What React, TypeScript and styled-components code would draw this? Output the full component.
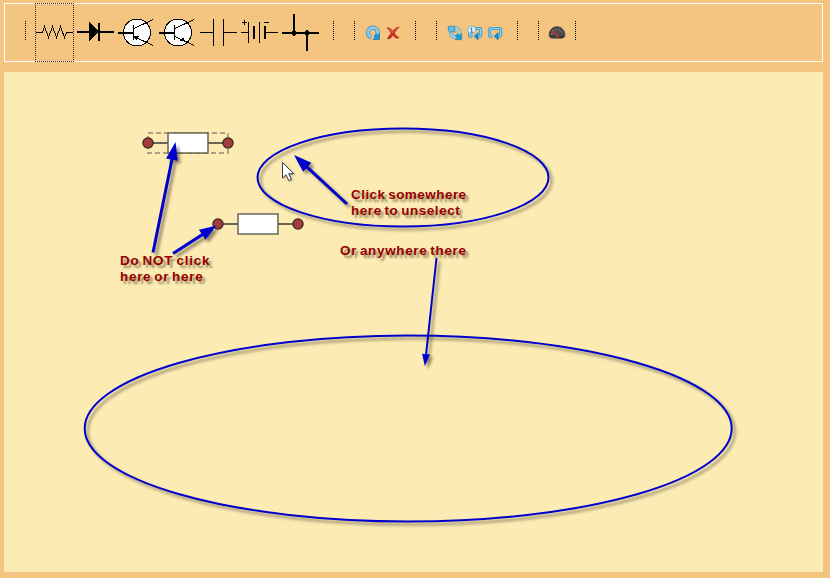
import React from "react";
import styled, { createGlobalStyle } from "styled-components";

const GlobalStyle = createGlobalStyle`
  body { margin: 0; background: #f4c580; font-family: "Liberation Sans", Arial, sans-serif; }
`;

const Page = styled.div`
  box-sizing: border-box;
  width: 830px;
  height: 578px;
  padding: 3px 7px 6px 4px;
  display: flex;
  flex-direction: column;
  gap: 10px;
  background: #f4c580;
`;

const Toolbar = styled.div`
  box-sizing: border-box;
  flex: none;
  height: 59px;
  border: 1px solid #fffdf5;
  display: flex;
  align-items: center;
`;

const Separator = styled.span<{ $before: number }>`
  flex: none;
  width: 1px;
  height: 19px;
  margin: 0 0 4px ${(p) => p.$before}px;
  background: repeating-linear-gradient(to bottom, #000 0 1px, transparent 1px 2px);
`;

const Parts = styled.div`
  display: flex;
  gap: 2px;
  margin: -1px 0 -1px 9px;
`;

const PartButton = styled.button<{ $selected?: boolean }>`
  box-sizing: border-box;
  width: 39px;
  height: 59px;
  padding: 0;
  border: 1px dotted ${(p) => (p.$selected ? "#4b2020" : "transparent")};
  background: transparent;
  svg { display: block; margin: -1px; }
`;

const Actions = styled.div<{ $before: number; $gap: number }>`
  display: flex;
  gap: ${(p) => p.$gap}px;
  margin-left: ${(p) => p.$before}px;
`;

const ActionButton = styled.button<{ $width?: number }>`
  width: ${(p) => p.$width ?? 16}px;
  height: 16px;
  padding: 0;
  border: 0;
  background: transparent;
  svg { display: block; }
`;

const Canvas = styled.main`
  position: relative;
  flex: none;
  height: 500px;
  background: #fcecb4;
`;

const Drawing = styled.svg`
  display: block;
  .mark { filter: drop-shadow(3px 3px 1.5px rgba(40, 30, 20, 0.5)); }
`;

const Note = styled.p<{ $x: number; $y: number }>`
  position: absolute;
  left: ${(p) => p.$x}px;
  top: ${(p) => p.$y}px;
  margin: 0;
  font-size: 13.5px;
  font-weight: bold;
  line-height: 16px;
  white-space: nowrap;
  color: #980000;
  text-shadow: 3px 3px 2px rgba(60, 45, 20, 0.5);
`;

const Line = styled.span<{ $spacing: number }>`
  display: block;
  letter-spacing: ${(p) => p.$spacing}px;
  word-spacing: -1.5px;
`;

function Glyph({ x, children }: { x: number; children: React.ReactNode }) {
  return (
    <svg width="39" height="59" viewBox={`${x} 3 39 59`} shapeRendering="crispEdges" stroke="none" fill="#000">
      {children}
    </svg>
  );
}

function Transistor({ x, npn }: { x: number; npn?: boolean }) {
  return (
    <Glyph x={x}>
      <circle cx={x + 20} cy="32.5" r="13.5" fill="#fff" stroke="#000" />
      <rect x={x + 1} y="32" width="16" height="2" />
      <rect x={x + 16} y="25" width="1" height="15" />
      <path d={`M${x + 17} 28.5L${x + 36} 19.5M${x + 17} 36.5L${x + 36} 45.5`} stroke="#000" fill="none" />
      {npn ? (
        <path d={`M${x + 21} 41h5v-3h-2z`} />
      ) : (
        <path d={`M${x + 17} 36h5l-1 2l-2 2l-2-3z`} />
      )}
    </Glyph>
  );
}

function RotateIcon() {
  return (
    <svg width="16" height="16">
      <path d="M6.5 12.2A4.9 4.9 0 1 1 11.5 10.8" fill="none" stroke="#4589b5" strokeWidth="4.2" />
      <path d="M6.5 12.2A4.9 4.9 0 1 1 11.5 10.8" fill="none" stroke="#8bcdf0" strokeWidth="2.8" />
      <path d="M8 14.5h6.5V8.3l-1.9 1.8-1.3-1-2.4 2.3 1 1.1z" fill="#1699df" stroke="#2478a9" strokeWidth=".7" />
    </svg>
  );
}

function DeleteIcon() {
  return (
    <svg width="16" height="16">
      <path d="M2 3Q4.8 1.6 7.6 6Q10.5 2.4 14.2 2Q11 5 9.3 8Q11 11.3 14 12.8Q11 14.4 7.8 10.2Q5.4 14.5 2.6 14Q2.6 12.5 6.3 8Q4.6 4.4 2 3z" fill="#cf3023" stroke="#a61d18" strokeWidth=".6" />
      <path d="M3.8 3.4Q6 4.3 7.7 7.4Q9.6 4.5 11.8 3.3" fill="none" stroke="#e8745f" strokeWidth=".8" />
    </svg>
  );
}

function RefreshIcon() {
  return (
    <svg width="16" height="16">
      <path d="M7.5 3.2Q13.2 3 12.4 9.5" fill="none" stroke="#7ba3a9" strokeWidth="3.8" />
      <path d="M7.5 3.2Q13.2 3 12.4 9.5" fill="none" stroke="#b5d3d2" strokeWidth="2.4" />
      <path d="M3.8 5.5Q3.2 11.8 9 12.6" fill="none" stroke="#5d9cbc" strokeWidth="3.8" />
      <path d="M3.8 5.5Q3.2 11.8 9 12.6" fill="none" stroke="#9bd2ec" strokeWidth="2.4" />
      <path d="M1.3 1.3h6.5v6.3L5.9 5.9 3.8 7.5 1.3 5.4z" fill="#62b9e8" stroke="#267fae" strokeWidth=".7" />
      <path d="M14.7 14.7H8.2l1.9-2-1.7-1.7 2.4-2.2 1.7 1.4 2.2-1.8z" fill="#189bdd" stroke="#267fae" strokeWidth=".7" />
    </svg>
  );
}

function LoopIcon({ once }: { once?: boolean }) {
  return (
    <svg width="16" height="16">
      <path d="M5.5 11.3H4Q2.5 11.3 2.5 9.7V5.2Q2.5 3.5 4.2 3.5H12Q13.7 3.5 13.7 5.2V9.6Q13.7 11.3 12 11.3H10" fill="none" stroke="#2d8dc4" strokeWidth="3.1" />
      <path d="M5.5 11.3H4Q2.5 11.3 2.5 9.7V5.2Q2.5 3.5 4.2 3.5H12Q13.7 3.5 13.7 5.2V9.6Q13.7 11.3 12 11.3H10" fill="none" stroke="#89d4f7" strokeWidth="1.6" />
      <path d="M7 11.3l4.1-3.7v7.4z" fill="#168bce" stroke="#19719e" strokeWidth=".5" />
      {once && (
        <>
          <circle cx="4.7" cy="4.9" r="4" fill="#e6f3fc" stroke="#6aa4cb" strokeWidth=".8" />
          <path d="M3.4 3.7l1.3-1v4.6M3.4 7.3h2.8" fill="none" stroke="#386a92" />
        </>
      )}
    </svg>
  );
}

function GaugeIcon() {
  return (
    <svg width="18" height="16">
      <path d="M1.2 10.3C1.2 5.3 4.5 1.8 9 1.8s7.8 3.5 7.8 8.5c0 1.6-1.5 2.8-3 2.8H4.2c-1.5 0-3-1.2-3-2.8z" fill="#4c4c4e" stroke="#29282a" strokeWidth=".8" />
      <path d="M3.8 9.3C4 6.3 6 4.3 9 4.3s5 2 5.2 5" fill="none" stroke="#a6a6a6" strokeDasharray="1 2.2" />
      <path d="M4 5.5l7 6.8" stroke="#e02b30" strokeWidth="1.2" />
      <path d="M2 11.8h5M11 11.8h5" stroke="#29282a" />
    </svg>
  );
}

function Resistor({ x, y, selected }: { x: number; y: number; selected?: boolean }) {
  return (
    <g>
      {selected && (
        <rect x={x} y={y - 10} width="80" height="20" fill="none" stroke="#aaa087" strokeWidth="1.8" strokeDasharray="5 3" />
      )}
      <path d={`M${x} ${y}h80`} stroke="#696653" strokeWidth="1.8" />
      <rect x={x + 20} y={y - 10} width="40" height="20" fill="#fff" stroke="#696653" strokeWidth="1.5" />
      <circle cx={x} cy={y} r="5.1" fill="#a33d3d" stroke="#35201c" strokeWidth="1.2" />
      <circle cx={x + 80} cy={y} r="5.1" fill="#a33d3d" stroke="#35201c" strokeWidth="1.2" />
    </g>
  );
}

type ArrowProps = { from: [number, number]; to: [number, number]; width?: number; head?: [number, number] };

function Arrow({ from, to, width = 3, head = [18, 6] }: ArrowProps) {
  const dx = to[0] - from[0];
  const dy = to[1] - from[1];
  const len = Math.hypot(dx, dy);
  const angle = (Math.atan2(dy, dx) * 180) / Math.PI;
  return (
    <g className="mark">
      <g transform={`translate(${from[0]} ${from[1]}) rotate(${angle})`} fill="#0000cd">
        <path d={`M0 0H${len - head[0] + 2}`} stroke="#0000cd" strokeWidth={width} />
        <path d={`M${len} 0l${-head[0]} ${-head[1]}v${head[1] * 2}z`} />
      </g>
    </g>
  );
}

export default function App() {
  return (
    <Page>
      <GlobalStyle />
      <Toolbar>
        <Separator $before={20} />
        <Parts>
          <PartButton $selected aria-label="Resistor">
            <Glyph x={35}>
              <path d="M36 32.5H42.5L44.5 26.5L48.5 37.5L52.5 26.5L56.5 37.5L60.5 26.5L64.5 37.5L66.5 32.5H73" fill="none" stroke="#000" />
            </Glyph>
          </PartButton>
          <PartButton aria-label="Diode">
            <Glyph x={76}>
              <rect x="77" y="31" width="37" height="2" />
              <path d="M89 22v19l10-9.5z" />
              <rect x="98" y="23" width="2" height="18" />
            </Glyph>
          </PartButton>
          <PartButton aria-label="PNP transistor"><Transistor x={117} /></PartButton>
          <PartButton aria-label="NPN transistor"><Transistor x={158} npn /></PartButton>
          <PartButton aria-label="Capacitor">
            <Glyph x={199}>
              <path d="M200 32h13v1h-13zM213 19h1v27h-1zM223 19h1v27h-1zM224 32h13v1h-13z" />
            </Glyph>
          </PartButton>
          <PartButton aria-label="Battery">
            <Glyph x={240}>
              <path d="M242 22h5v1h-5zM244 20h1v5h-1zM264 22h5v1h-5zM241 32h7v1h-7zM248 22h1v21h-1zM253 26h2v13h-2zM259 22h1v21h-1zM264 26h2v13h-2zM266 32h12v1h-12z" />
            </Glyph>
          </PartButton>
          <PartButton aria-label="Wire">
            <Glyph x={281}>
              <path d="M282 32h37v2h-37zM293 14h2v19h-2zM306 33h2v18h-2zM292 31h4v4h-4zM293 30h2v6h-2zM305 31h4v4h-4zM306 30h2v6h-2z" />
            </Glyph>
          </PartButton>
        </Parts>
        <Separator $before={13} />
        <Separator $before={20} />
        <Actions $before={10} $gap={4}>
          <ActionButton aria-label="Rotate"><RotateIcon /></ActionButton>
          <ActionButton aria-label="Delete"><DeleteIcon /></ActionButton>
        </Actions>
        <Separator $before={14} />
        <Separator $before={20} />
        <Actions $before={10} $gap={4}>
          <ActionButton aria-label="Refresh"><RefreshIcon /></ActionButton>
          <ActionButton aria-label="Run once"><LoopIcon once /></ActionButton>
          <ActionButton aria-label="Run"><LoopIcon /></ActionButton>
        </Actions>
        <Separator $before={14} />
        <Separator $before={20} />
        <Actions $before={9} $gap={0}>
          <ActionButton $width={18} aria-label="Meter"><GaugeIcon /></ActionButton>
        </Actions>
        <Separator $before={9} />
      </Toolbar>

      <Canvas>
        <Drawing width="819" height="500" viewBox="4 72 819 500">
          <Resistor x={148} y={143} selected />
          <Resistor x={218} y={224} />
          <g className="mark" fill="none" stroke="#0000cd" strokeWidth="2">
            <ellipse cx="403" cy="177.5" rx="145.5" ry="49" />
            <ellipse cx="408.2" cy="428.5" rx="323.5" ry="93" />
          </g>
          <Arrow from={[153, 252.5]} to={[175.5, 142]} />
          <Arrow from={[173, 253.5]} to={[216.5, 225.5]} head={[17, 6]} />
          <Arrow from={[347, 204]} to={[294, 155]} />
          <Arrow from={[436.5, 258]} to={[424.8, 366]} width={2} head={[12, 4]} />
          <path
            d="M282.5 162.5v15.5l3.5-3.2 2.7 5.8 2.7-1.2-2.7-5.7h5z"
            fill="#fff"
            stroke="#3c3c48"
            filter="drop-shadow(1px 1px 1px rgba(0,0,0,.25))"
          />
        </Drawing>
        <Note $x={347} $y={115}>
          <Line $spacing={0.45}>Click somewhere</Line>
          <Line $spacing={0.55}>here to unselect</Line>
        </Note>
        <Note $x={336} $y={171}>
          <Line $spacing={0.65}>Or anywhere there</Line>
        </Note>
        <Note $x={116} $y={181}>
          <Line $spacing={0.77}>Do NOT click</Line>
          <Line $spacing={0.7}>here or here</Line>
        </Note>
      </Canvas>
    </Page>
  );
}
